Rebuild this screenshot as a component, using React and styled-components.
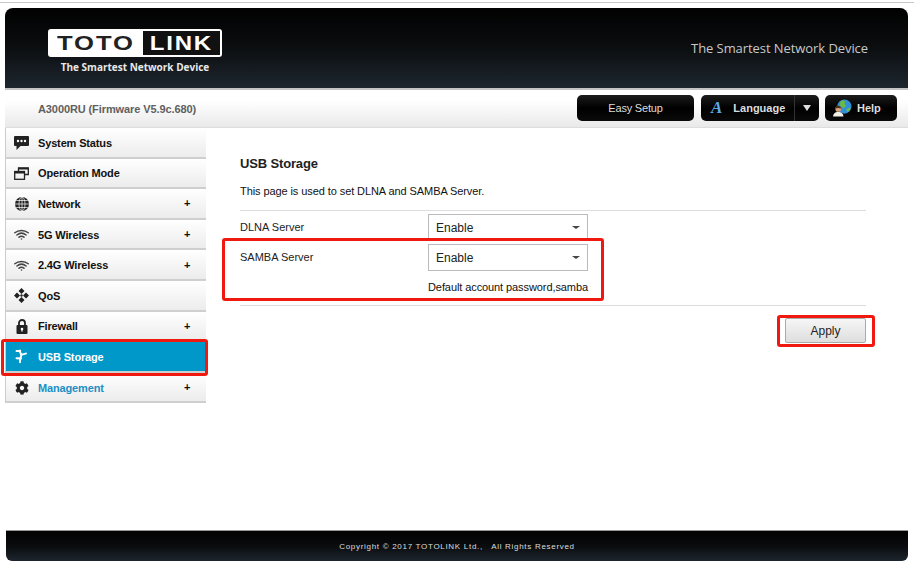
import styled, { createGlobalStyle } from "styled-components";
import { FaCog } from "react-icons/fa";

const GlobalStyle = createGlobalStyle`
html,body{
    margin:0;
    padding:0;
    background:#fff;
}
body{
    font-family:"Liberation Sans",Arial,sans-serif;
}
`

function ChatIcon() {
    return (
        <svg width="15" height="14" viewBox="0 0 15 14">
            <path d="M1 0h13a1 1 0 0 1 1 1v8a1 1 0 0 1-1 1H6.500L2.500 14v-4H1a1 1 0 0 1-1-1V1a1 1 0 0 1 1-1z" fill="#222" />
            <circle cx="4" cy="5" r="1.200" fill="#fff" />
            <circle cx="7.500" cy="5" r="1.200" fill="#fff" />
            <circle cx="11" cy="5" r="1.200" fill="#fff" />
        </svg>
    )
}

function WindowsIcon() {
    return (
        <svg width="15" height="13" viewBox="0 0 15 13" fill="none" stroke="#222" strokeWidth="1.300">
            <path d="M4.500 4V1h9.800v6.500h-3.300" />
            <rect x=".7" y="4.500" width="9.800" height="7.800" />
            <path d="M.7 5.500h9.800M4.500 1.700h9.800" strokeWidth="1.800" />
        </svg>
    )
}

function GlobeIcon() {
    return (
        <svg width="14" height="14" viewBox="0 0 14 14">
            <circle cx="7" cy="7" r="7" fill="#222" />
            <g fill="none" stroke="#fff" strokeWidth=".7">
                <ellipse cx="7" cy="7" rx="3" ry="7" />
                <path d="M7 0v14M0 7h14M1.200 3.500h11.600M1.200 10.500h11.600" />
            </g>
        </svg>
    )
}

function WifiIcon() {
    return (
        <svg width="15" height="11" viewBox="0 0 15 11" fill="none" stroke="#444" strokeWidth="1.500" strokeLinecap="round">
            <path d="M.8 3.800C4.500.6 10.500.6 14.200 3.800" />
            <path d="M2.900 6C5.600 3.800 9.400 3.800 12.100 6" />
            <path d="M5 8.200c1.500-1.100 3.500-1.100 5 0" />
            <circle cx="7.500" cy="10" r=".8" fill="#444" stroke="none" />
        </svg>
    )
}

function QosIcon() {
    return (
        <svg width="15" height="15" viewBox="0 0 15 15" fill="#222">
            <path d="M7.500 0l3 3-3 3-3-3zM7.500 9l3 3-3 3-3-3zM3 4.500l3 3-3 3-3-3zM12 4.500l3 3-3 3-3-3z" />
            <circle cx="7.500" cy="7.500" r="1.200" />
        </svg>
    )
}

function LockIcon() {
    return (
        <svg width="12" height="15" viewBox="0 0 12 15">
            <path d="M3 6.500V4a3 3 0 0 1 6 0v2.500" fill="none" stroke="#222" strokeWidth="1.800" />
            <rect x=".5" y="6" width="11" height="9" rx="1" fill="#222" />
            <circle cx="6" cy="10" r="1.300" fill="#fff" />
            <rect x="5.400" y="10" width="1.200" height="2.600" fill="#fff" />
        </svg>
    )
}

function UsbIcon() {
    return (
        <svg width="13" height="15" viewBox="0 0 13 15" fill="none" stroke="#fff" strokeWidth="2" strokeLinecap="round">
            <path d="M5 1.500c0 2 .3 2.600 1 3.500.6.900.4 2-.3 3.200-.5.900-1 2-.7 5" />
            <path d="M1.500 2h3M6 5.500c1.500 0 2.500-.3 5-1M6 9.500c-1.500-.2-2.500-.3-4.500-.3" />
        </svg>
    )
}

function HelpIcon() {
    return (
        <svg width="19" height="18" viewBox="0 0 20 19">
            <circle cx="12" cy="8" r="7.500" fill="#2f8fd8" />
            <path d="M8 2.500c2-1.500 4-1 5 0l-1 2.500 2 2-3 3-2-2-2-1.500zM14 11l3-2 1.500 1c-.8 1.800-2 3-3.500 3.700z" fill="#6cbb3c" />
            <path d="M0 18.500c0-3 2-4.300 4-4.800h3c2 .5 4 1.800 4 4.800z" fill="#f3f0e8" />
            <circle cx="5.500" cy="10.500" r="3" fill="#d9a27a" />
            <path d="M2.500 10c0-4 6-4 6 0-2-.8-4-.8-6 0z" fill="#4a2c18" />
        </svg>
    )
}

const menu = [
    { name: "System Status", icon: <ChatIcon /> },
    { name: "Operation Mode", icon: <WindowsIcon /> },
    { name: "Network", icon: <GlobeIcon />, more: true },
    { name: "5G Wireless", icon: <WifiIcon />, more: true },
    { name: "2.4G Wireless", icon: <WifiIcon />, more: true },
    { name: "QoS", icon: <QosIcon /> },
    { name: "Firewall", icon: <LockIcon />, more: true },
    { name: "USB Storage", icon: <UsbIcon />, active: true },
    { name: "Management", icon: <FaCog size={14} />, more: true, open: true },
]

function App() {
    return (
        <Page>
            <GlobalStyle />
            <Frame>
                <Header>
                    <LogoBlock>
                        <Logo>
                            <Toto>TOTO</Toto>
                            <Link><LinkText>LINK</LinkText></Link>
                        </Logo>
                        <Tagline>The Smartest Network Device</Tagline>
                    </LogoBlock>
                    <Slogan>The Smartest Network Device</Slogan>
                </Header>
                <SubBar>
                    <Model>A3000RU (Firmware V5.9c.680)</Model>
                    <Buttons>
                        <EasyButton>Easy Setup</EasyButton>
                        <LangButton>
                            <LangMain>
                                <LangA>A</LangA>
                                <b>Language</b>
                            </LangMain>
                            <LangArrow />
                        </LangButton>
                        <HelpButton>
                            <HelpIcon />
                            <b>Help</b>
                        </HelpButton>
                    </Buttons>
                </SubBar>
                <Body>
                    <Sidebar>
                        {menu.map(item => (
                            <MenuItem key={item.name} $active={item.active} $open={item.open}>
                                <MenuIcon>{item.icon}</MenuIcon>
                                <MenuName>{item.name}</MenuName>
                                {item.more && <Plus>+</Plus>}
                            </MenuItem>
                        ))}
                    </Sidebar>
                    <Main>
                        <Title>USB Storage</Title>
                        <Desc>This page is used to set DLNA and SAMBA Server.</Desc>
                        <Rows>
                            <Row>
                                <Label>DLNA Server</Label>
                                <SelectWrap>
                                    <Select defaultValue="Enable">
                                        <option>Enable</option>
                                        <option>Disable</option>
                                    </Select>
                                </SelectWrap>
                            </Row>
                            <SambaRow>
                                <Row>
                                    <Label>SAMBA Server</Label>
                                    <SelectWrap>
                                        <Select defaultValue="Enable">
                                            <option>Enable</option>
                                            <option>Disable</option>
                                        </Select>
                                    </SelectWrap>
                                </Row>
                                <Note>Default account password,samba</Note>
                            </SambaRow>
                        </Rows>
                        <Actions>
                            <ApplyButton>Apply</ApplyButton>
                        </Actions>
                    </Main>
                </Body>
                <Footer>Copyright © 2017 TOTOLINK Ltd.,&nbsp;&nbsp; All Rights Reserved</Footer>
            </Frame>
        </Page>
    )
}

const Page = styled.div`
width:914px;
height:563px;
overflow:hidden;
box-sizing:border-box;
padding-top:8px;
position:relative;
&::before{
    content:"";
    position:absolute;
    left:0;
    right:0;
    top:2px;
    height:1px;
    background:#c8c8c8;
}
`
const Frame = styled.div`
margin-left:5px;
width:903px;
`
const Header = styled.div`
height:80px;
box-sizing:border-box;
border-radius:8px 8px 0 0;
background:linear-gradient(180deg,#010101 0%,#0a0c0e 45%,#1d262e 100%);
display:flex;
justify-content:space-between;
padding:21px 40px 0 43px;
`
const LogoBlock = styled.div`
width:174px;
display:flex;
flex-direction:column;
align-items:center;
`
const Logo = styled.div`
width:174px;
height:28px;
box-sizing:border-box;
background:#fff;
border-radius:3px;
display:flex;
align-items:center;
justify-content:space-between;
padding:0 2px 0 9px;
`
const Toto = styled.span`
font-size:20px;
font-weight:700;
letter-spacing:1.5px;
color:#222;
display:inline-block;
transform:scaleX(1.28);
transform-origin:left center;
`
const Link = styled.span`
width:77px;
height:24px;
background:#111;
display:flex;
align-items:center;
justify-content:center;
`
const LinkText = styled.span`
color:#fff;
font-size:20px;
font-weight:700;
letter-spacing:1.5px;
display:inline-block;
transform:scaleX(1.2);
`
const Tagline = styled.div`
margin-top:4px;
font-family:"Open Sans","Liberation Sans",sans-serif;
font-size:10px;
font-weight:700;
line-height:13px;
color:#e8e8e8;
white-space:nowrap;
`
const Slogan = styled.div`
margin-top:10px;
font-family:"Open Sans","Liberation Sans",sans-serif;
font-size:13px;
letter-spacing:-.07px;
line-height:18px;
color:#c8c8c8;
white-space:nowrap;
`
const SubBar = styled.div`
height:39px;
box-sizing:border-box;
background:linear-gradient(180deg,#fff 0%,#fff 30%,#e9e9e9 100%);
border-top:2px solid #c4c4c4;
box-shadow:0 1px 0 #ddd;
display:flex;
align-items:center;
justify-content:space-between;
padding:0 11px 0 33px;
`
const Model = styled.div`
font-size:11px;
font-weight:700;
letter-spacing:-.1px;
color:#606060;
`
const Buttons = styled.div`
display:flex;
gap:7px;
margin-top:-2px;
`
const DarkButton = styled.div`
height:26px;
box-sizing:border-box;
border-radius:5px;
background:linear-gradient(180deg,#1c1c1c 0%,#000 50%,#0a0a0a 100%);
color:#ddd;
font-size:11px;
display:flex;
align-items:center;
justify-content:center;
b{
    font-weight:700;
}
`
const EasyButton = styled(DarkButton)`
width:117px;
letter-spacing:-.2px;
`
const LangButton = styled(DarkButton)`
width:118px;
justify-content:flex-start;
`
const LangMain = styled.div`
width:94px;
height:100%;
box-sizing:border-box;
border-right:1px solid #333;
display:flex;
align-items:center;
padding-left:10px;
gap:11px;
`
const LangA = styled.span`
font-family:"Liberation Serif",serif;
font-size:17px;
font-weight:700;
font-style:italic;
color:#5aa9e0;
`
const LangArrow = styled.span`
margin-left:8px;
width:0;
height:0;
border-left:4px solid transparent;
border-right:4px solid transparent;
border-top:6px solid #ddd;
`
const HelpButton = styled(DarkButton)`
width:72px;
margin-left:-1px;
justify-content:flex-start;
padding-left:8px;
gap:5px;
`
const Body = styled.div`
display:flex;
height:403px;
`
const Sidebar = styled.div`
width:201px;
flex:none;
margin-top:1px;
`
const MenuItem = styled.div`
height:30.6px;
box-sizing:border-box;
display:flex;
align-items:center;
position:relative;
z-index:${props => props.$active ? 1 : "auto"};
padding:1px 0 0 8px;
font-size:11px;
font-weight:700;
letter-spacing:-.15px;
border-left:1px solid #ccc;
border-bottom:2px solid #cfcfcf;
color:${props => props.$active ? "#fff" : props.$open ? "#1b8fc4" : "#111"};
background:${props => props.$active ? "#0097c9" : "linear-gradient(180deg,#fff 0%,#ececec 100%)"};
svg{
    color:#222;
}
${props => props.$active && `
    &::after{
        content:"";
        position:absolute;
        left:-5px;
        right:-2px;
        top:-3px;
        bottom:-5px;
        border:3px solid #f0190f;
        border-radius:3px;
    }
`}
`
const MenuIcon = styled.span`
width:15px;
height:15px;
flex:none;
display:flex;
align-items:center;
justify-content:center;
`
const MenuName = styled.span`
margin-left:9px;
flex:1;
`
const Plus = styled.span`
position:absolute;
left:178px;
top:50%;
transform:translateY(-50%);
font-size:11px;
color:#111;
`
const Main = styled.div`
flex:1;
padding:28px 42px 0 34px;
`
const Title = styled.h2`
margin:0;
font-size:13px;
font-weight:700;
letter-spacing:-.15px;
line-height:18px;
color:#222;
`
const Desc = styled.p`
margin:11px 0 0;
font-size:11px;
letter-spacing:-.085px;
line-height:14px;
color:#111;
`
const Rows = styled.div`
margin-top:12px;
padding-top:3px;
border-top:1px solid #ddd;
border-bottom:1px solid #ddd;
display:flex;
flex-direction:column;
gap:3px;
`
const Row = styled.div`
display:flex;
`
const SambaRow = styled.div`
position:relative;
padding-bottom:11px;
&::after{
    content:"";
    position:absolute;
    left:-18px;
    width:382px;
    top:-6px;
    height:63px;
    box-sizing:border-box;
    border:3px solid #f0190f;
    border-radius:3px;
}
`
const Label = styled.div`
width:188px;
flex:none;
font-size:11px;
line-height:26px;
color:#222;
`
const SelectWrap = styled.div`
position:relative;
width:160px;
&::after{
    content:"";
    position:absolute;
    right:8px;
    top:12px;
    border-left:4px solid transparent;
    border-right:4px solid transparent;
    border-top:3px solid #444;
}
`
const Select = styled.select`
appearance:none;
display:block;
width:100%;
height:27px;
box-sizing:border-box;
border:1px solid #bbb;
border-radius:0;
background:#fff;
padding:0 0 0 7px;
font-family:"Liberation Sans",Arial,sans-serif;
font-size:12px;
color:#222;
outline:none;
`
const Note = styled.div`
margin:10px 0 0 188px;
font-size:11px;
letter-spacing:-.09px;
line-height:13px;
color:#111;
white-space:nowrap;
`
const Actions = styled.div`
display:flex;
justify-content:flex-end;
margin-top:12px;
`
const ApplyButton = styled.button`
width:81px;
height:25px;
position:relative;
box-sizing:border-box;
border:1px solid #aaa;
border-radius:2px;
background:linear-gradient(180deg,#f6f6f6 0%,#dedede 100%);
font-family:"Liberation Sans",Arial,sans-serif;
font-size:12px;
color:#222;
padding:0;
&::after{
    content:"";
    position:absolute;
    left:-9px;
    right:-10px;
    top:-4px;
    bottom:-5px;
    border:3px solid #f0190f;
    border-radius:3px;
}
`
const Footer = styled.div`
height:31px;
margin-left:1px;
border-top:1px solid #999;
box-sizing:border-box;
border-radius:0 0 6px 6px;
background:linear-gradient(180deg,#010101 0%,#0a0c0e 50%,#1d262e 100%);
color:#ddd;
font-size:8px;
letter-spacing:.7px;
display:flex;
align-items:center;
justify-content:center;
`

export default App
